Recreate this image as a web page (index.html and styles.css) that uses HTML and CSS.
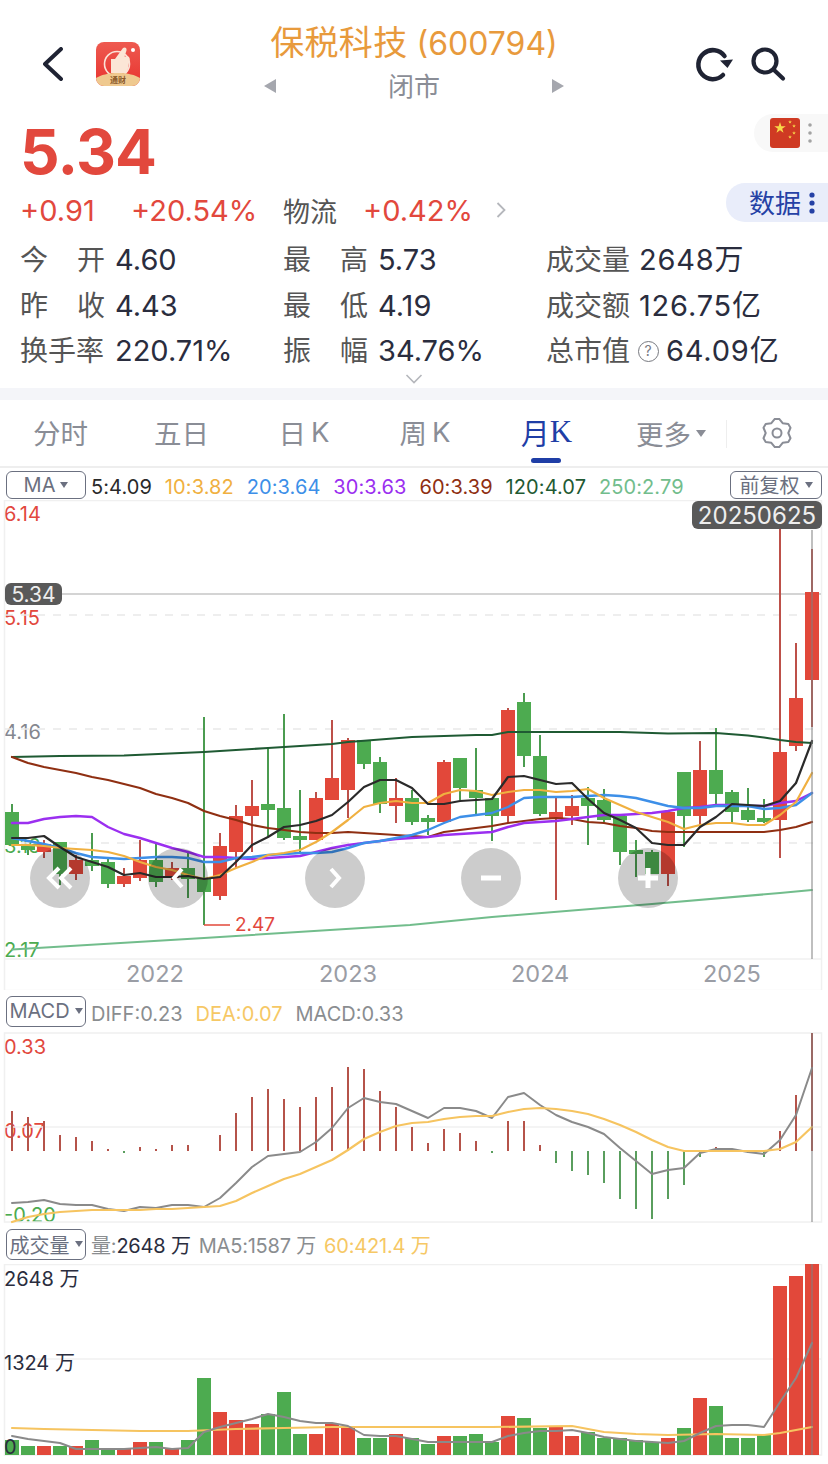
FILE: index.html
```html
<!DOCTYPE html>
<html lang="zh-CN">
<head>
    <meta charset="UTF-8">
    <meta name="viewport" content="width=device-width, initial-scale=1.0">
    <title>保税科技 (600794)</title>
    <link rel="stylesheet" href="styles.css">
</head>
<body>
    <!-- Top bar -->
    <header class="topbar">
        <div class="topbar-left">
            <svg class="icon-back" width="20" height="34" viewBox="43 47 20 34"><polyline points="61,49 45,64 61,79" fill="none" stroke="#1f2333" stroke-width="4" stroke-linecap="round" stroke-linejoin="round"/></svg>
            <svg class="app-logo" width="44" height="44" viewBox="0 0 44 44">
                <defs>
                    <linearGradient id="logoBg" x1="0" y1="0" x2="0" y2="1"><stop offset="0" stop-color="#ee5a50"/><stop offset="1" stop-color="#e8332f"/></linearGradient>
                </defs>
                <rect width="44" height="44" rx="8" fill="url(#logoBg)"/>
                <circle cx="21" cy="22" r="12.5" fill="none" stroke="#fbe3d8" stroke-width="1.6"/>
                <path d="M15 17h4l8-11c2-1.500 4 0 3.500 2.500l-2 6h3c2 0 2.500 2 2 3.500l-2 11c-.5 1.500-1.500 2-3 2H15z" fill="#fbe6d6"/>
                <circle cx="37" cy="8" r="2" fill="#fff"/>
                <path d="M0 36c5-3 12-5 22-5s17 2 22 5a8 8 0 0 1-8 8H8a8 8 0 0 1-8-8z" fill="#efc98f"/>
                <text class="logo-text" x="22" y="41">通财</text>
            </svg>
        </div>
        <div class="topbar-center">
            <div class="stock-title"><span class="stock-name">保税科技</span> (600794)</div>
            <div class="market-state">
                <span class="tri tri-left"></span>
                <span class="state-text">闭市</span>
                <span class="tri tri-right"></span>
            </div>
        </div>
        <div class="topbar-right">
            <svg width="40" height="36" viewBox="695 46 40 36">
                <path d="M724.5 56A14.5 14.5 0 1 0 723 75" fill="none" stroke="#1f2333" stroke-width="4.5" stroke-linecap="round"/>
                <polygon points="720,60.500 733,59.500 727.500,68" fill="#1f2333"/>
            </svg>
            <svg width="36" height="36" viewBox="750 46 36 36">
                <circle cx="765" cy="61" r="11.5" fill="none" stroke="#1f2333" stroke-width="4.2"/>
                <line x1="774" y1="70" x2="783" y2="78.5" stroke="#1f2333" stroke-width="4.2" stroke-linecap="round"/>
            </svg>
        </div>
    </header>

    <!-- Quote -->
    <section class="quote">
        <div class="quote-left">
            <div class="price">5.34</div>
            <div class="change-row">
                <span class="chg chg-amount">+0.91</span>
                <span class="chg chg-pct">+20.54%</span>
                <span class="sector">物流</span>
                <span class="chg chg-sector">+0.42%</span>
                <svg class="sector-more" width="10" height="16" viewBox="0 0 10 16"><polyline points="1.5,1 8.5,8 1.5,15" fill="none" stroke="#b5b7bc" stroke-width="1.8"/></svg>
            </div>
        </div>
        <div class="quote-right">
            <div class="flag-tab">
                <svg width="30" height="30" viewBox="0 0 30 30">
                    <defs><polygon id="star" points="0,-1 .225,-.309 .951,-.309 .363,.118 .588,.809 0,.382 -.588,.809 -.363,.118 -.951,-.309 -.225,-.309"/></defs>
                    <rect width="30" height="30" rx="3" fill="#cf3a23"/>
                    <use href="#star" fill="#f8d94a" transform="translate(10 10) scale(6)"/>
                    <use href="#star" fill="#f8d94a" transform="translate(20 4) scale(2)"/>
                    <use href="#star" fill="#f8d94a" transform="translate(24 8) scale(2)"/>
                    <use href="#star" fill="#f8d94a" transform="translate(24 15) scale(2)"/>
                    <use href="#star" fill="#f8d94a" transform="translate(20 19) scale(2)"/>
                </svg>
                <svg class="flag-dots" width="6" height="22" viewBox="0 0 6 22"><circle cx="3" cy="3" r="1.8" fill="#a3a3a3"/><circle cx="3" cy="11" r="1.8" fill="#a3a3a3"/><circle cx="3" cy="19" r="1.8" fill="#a3a3a3"/></svg>
            </div>
            <div class="data-tab">
                <span class="data-text">数据</span>
                <svg width="6" height="22" viewBox="0 0 6 22"><circle cx="3" cy="3" r="2.6" fill="#2541a5"/><circle cx="3" cy="11" r="2.6" fill="#2541a5"/><circle cx="3" cy="19" r="2.6" fill="#2541a5"/></svg>
            </div>
        </div>
    </section>

    <section class="stats">
        <div class="stat"><span class="stat-label"><i>今</i><i>开</i></span><span>4.60</span></div>
        <div class="stat"><span class="stat-label"><i>最</i><i>高</i></span><span>5.73</span></div>
        <div class="stat"><span class="stat-label">成交量</span><span>2648万</span></div>
        <div class="stat"><span class="stat-label"><i>昨</i><i>收</i></span><span>4.43</span></div>
        <div class="stat"><span class="stat-label"><i>最</i><i>低</i></span><span>4.19</span></div>
        <div class="stat"><span class="stat-label">成交额</span><span>126.75亿</span></div>
        <div class="stat"><span class="stat-label">换手率</span><span>220.71%</span></div>
        <div class="stat"><span class="stat-label"><i>振</i><i>幅</i></span><span>34.76%</span></div>
        <div class="stat"><span class="stat-label">总市值</span><span class="help">?</span><span>64.09亿</span></div>
    </section>
    <div class="expand">
        <svg width="18" height="10" viewBox="0 0 18 10"><polyline points="1.5,1 9,8.5 16.5,1" fill="none" stroke="#b5b7bc" stroke-width="1.6"/></svg>
    </div>
    <div class="band"></div>

    <!-- Period tabs -->
    <nav class="tabs">
        <span class="tab">分时</span>
        <span class="tab">五日</span>
        <span class="tab">日<b>K</b></span>
        <span class="tab">周<b>K</b></span>
        <span class="tab tab-active">月<b>K</b></span>
        <span class="tab tab-more">更多<em class="caret"></em></span>
        <span class="tab-gear">
            <svg width="30" height="30" viewBox="0 0 30 30">
                <path d="M12.8 .9L17.2 .9L20.65 5.2L26.3 5.95L28.5 9.75L26.3 15L28.5 20.25L26.3 24.05L20.65 24.8L17.2 29.1L12.8 29.1L9.35 24.8L3.7 24.05L1.5 20.25L3.7 15L1.5 9.75L3.7 5.95L9.35 5.2Z" fill="none" stroke="#8a8d96" stroke-width="2" stroke-linejoin="round"/>
                <circle cx="15" cy="15" r="4.5" fill="none" stroke="#8a8d96" stroke-width="2"/>
            </svg>
        </span>
    </nav>

    <!-- K line -->
    <div class="chart-head head-main">
        <span class="pick pick-ma">MA<em class="caret"></em></span>
        <span class="legend legend-main">
            <span class="c-ma5">5:4.09</span>
            <span class="c-ma10">10:3.82</span>
            <span class="c-ma20">20:3.64</span>
            <span class="c-ma30">30:3.63</span>
            <span class="c-ma60">60:3.39</span>
            <span class="c-ma120">120:4.07</span>
            <span class="c-ma250">250:2.79</span>
        </span>
        <span class="pick pick-adjust">前复权<em class="caret"></em></span>
    </div>
    <div class="chart-canvas canvas-main">
        <span class="axis-label main-a up">6.14</span>
        <span class="axis-label main-b up">5.15</span>
        <span class="axis-label main-c flat">4.16</span>
        <span class="axis-label main-d down">3.16</span>
        <span class="axis-label main-e down">2.17</span>
        <svg id="klineChart" width="828" height="490" viewBox="0 500 828 490"></svg>
        <span class="tag tag-price">5.34</span>
        <span class="tag tag-date">20250625</span>
        <span class="low-label">2.47</span>
        <span class="year year-a">2022</span>
        <span class="year year-b">2023</span>
        <span class="year year-c">2024</span>
        <span class="year year-d">2025</span>
        <span class="zoom-btn zoom-a"><svg width="30" height="24" viewBox="0 0 30 24"><path d="M14 2L4 12L14 22M26 2L16 12L26 22" fill="none" stroke="#fff" stroke-width="4"/></svg></span>
        <span class="zoom-btn zoom-b"><svg width="14" height="24" viewBox="0 0 14 24"><path d="M11 3L3 12L11 21" fill="none" stroke="#fff" stroke-width="4"/></svg></span>
        <span class="zoom-btn zoom-c"><svg width="14" height="24" viewBox="0 0 14 24"><path d="M3 3L11 12L3 21" fill="none" stroke="#fff" stroke-width="4"/></svg></span>
        <span class="zoom-btn zoom-d"><svg width="20" height="6" viewBox="0 0 20 6"><rect y=".5" width="20" height="5" fill="#fff"/></svg></span>
        <span class="zoom-btn zoom-e"><svg width="20" height="20" viewBox="0 0 20 20"><path d="M0 7.5h20v5H0zM7.5 0h5v20h-5z" fill="#fff"/></svg></span>
    </div>

    <!-- MACD -->
    <div class="chart-head head-macd">
        <span class="pick pick-sub">MACD<em class="caret"></em></span>
        <span class="legend legend-sub">
            <span class="c-grey">DIFF:0.23</span>
            <span class="c-yellow">DEA:0.07</span>
            <span class="c-grey">MACD:0.33</span>
        </span>
    </div>
    <div class="chart-canvas canvas-macd">
        <span class="axis-label row-a up">0.33</span>
        <span class="axis-label row-b up">0.07</span>
        <span class="axis-label row-c down">-0.20</span>
        <svg id="macdChart" width="828" height="192" viewBox="0 1032 828 192"></svg>
    </div>

    <!-- Volume -->
    <div class="chart-head head-vol">
        <span class="pick pick-sub">成交量<em class="caret"></em></span>
        <span class="legend legend-vol">
            <span><span class="c-grey">量:</span><span class="c-dark">2648 万</span></span>
            <span class="c-grey">MA5:1587 万</span>
            <span class="c-yellow">60:421.4 万</span>
        </span>
    </div>
    <div class="chart-canvas canvas-vol">
        <svg id="volChart" width="828" height="200" viewBox="0 1264 828 200"></svg>
        <span class="axis-label row-a dark">2648 万</span>
        <span class="axis-label row-b dark">1324 万</span>
        <span class="axis-label row-c dark">0</span>
    </div>

    <script src="chart.js"></script>
</body>
</html>
```

FILE: styles.css
```css
* {
    box-sizing: border-box;
}
body {
    margin: 0;
    width: 828px;
    height: 1464px;
    overflow: hidden;
    background-color: #fff;
    font-family: Inter, "Noto Sans CJK SC", sans-serif;
    color: #2a2d3e;
}
svg {
    display: block;
}

/* top bar */
.topbar {
    display: grid;
    grid-template-columns: 264px 300px 264px;
    height: 110px;
    padding-top: 21px;
}
.topbar-left {
    display: flex;
    align-items: flex-start;
}
.icon-back {
    margin: 26px 0 0 43px;
}
.app-logo {
    margin: 21px 0 0 33px;
}
.logo-text {
    font-size: 8px;
    font-weight: 700;
    fill: #8b5a2b;
    text-anchor: middle;
}
.topbar-center {
    text-align: center;
}
.stock-title {
    font-size: 32px;
    line-height: 43px;
    color: #e89a3c;
    white-space: nowrap;
}
.stock-name {
    font-size: 34px;
    letter-spacing: .3px;
}
.market-state {
    display: flex;
    align-items: center;
    justify-content: space-between;
    height: 42px;
    font-size: 26px;
    color: #8a8d96;
}
.state-text {
    padding-bottom: 4px;
}
.tri {
    width: 0;
    height: 0;
    border-top: 7px solid transparent;
    border-bottom: 7px solid transparent;
}
.tri-left {
    border-right: 12px solid #a5a7ae;
}
.tri-right {
    border-left: 12px solid #a5a7ae;
}
.topbar-right {
    display: flex;
    align-items: flex-start;
    gap: 15px;
    padding: 25px 0 0 131px;
}

/* quote */
.quote {
    display: flex;
    justify-content: space-between;
    height: 123px;
    margin-top: 4px;
}
.quote-left {
    padding: 4px 0 0 20px;
}
.price {
    height: 68px;
    font-size: 62px;
    line-height: 68px;
    font-weight: 700;
    letter-spacing: -.8px;
    color: #e2483d;
}
.change-row {
    display: flex;
    align-items: center;
    height: 40px;
    margin-top: 4px;
    font-size: 29px;
    white-space: nowrap;
}
.chg {
    color: #e2483d;
}
.chg-amount {
    width: 111px;
}
.chg-pct {
    width: 152px;
}
.sector {
    width: 80px;
    font-size: 27px;
    color: #555;
}
.chg-sector {
    width: 133px;
}
.quote-right {
    display: flex;
    flex-direction: column;
    align-items: flex-end;
}
.flag-tab {
    display: flex;
    align-items: center;
    width: 74px;
    height: 38px;
    padding-left: 16px;
    background-color: #f8f8f8;
    border-radius: 19px 0 0 19px;
}
.flag-dots {
    margin-left: 7px;
}
.data-tab {
    display: flex;
    align-items: center;
    gap: 8px;
    width: 102px;
    height: 39px;
    margin-top: 31px;
    padding-left: 23px;
    background-color: #e9edfa;
    border-radius: 19px 0 0 19px;
    font-size: 26px;
    color: #2541a5;
}
.data-text {
    padding-bottom: 2px;
}

/* stats */
.stats {
    display: grid;
    grid-template-columns: 263px 263px 282px;
    grid-auto-rows: 45.5px;
    padding: .5px 0 0 20px;
    font-size: 29px;
    line-height: 36px;
    white-space: nowrap;
}
.stat {
    display: flex;
    align-items: center;
}
.stat:nth-child(3n) {
    letter-spacing: .8px;
}
.stat-label {
    display: flex;
    justify-content: space-between;
    width: 85px;
    margin-right: 10px;
    font-size: 28px;
    letter-spacing: 0;
    color: #555;
}
.stat:nth-child(3n) .stat-label {
    margin-right: 8px;
}
.stat-label i {
    font-style: normal;
}
.stat .help {
    display: flex;
    align-items: center;
    justify-content: center;
    width: 21px;
    height: 21px;
    margin: 0 7px 0 -1px;
    border: 1px solid #77797f;
    border-radius: 50%;
    font-size: 14px;
    color: #77797f;
}
.expand {
    display: flex;
    justify-content: center;
    height: 14px;
}
.band {
    height: 12px;
    background-color: #f4f5f9;
}

/* tabs */
.tabs {
    display: grid;
    grid-template-columns: repeat(5, 121px) 122px 101px;
    height: 68px;
    border-bottom: 2px solid #eee;
    font-size: 27.5px;
    color: #8a8d96;
}
.tab {
    display: flex;
    align-items: center;
    justify-content: center;
    padding-bottom: 2px;
}
.tab b {
    margin-left: 5px;
    font-weight: 400;
}
.tab:nth-child(3),
.tab:nth-child(4) {
    padding-left: 3px;
}
.tab-active {
    position: relative;
    padding-left: 4px;
    color: #1f3ea6;
    font-size: 29px;
}
.tab-active b {
    margin-left: 0;
    font-family: "Liberation Serif", serif;
    font-size: 31px;
}
.tab-active::after {
    content: "";
    position: absolute;
    left: 47px;
    bottom: 3px;
    width: 30px;
    height: 5px;
    background-color: #1f3ea6;
    border-radius: 3px;
}
.tab-more {
    justify-content: flex-start;
    padding-left: 31px;
    height: 28px;
    margin-top: 20px;
    border-right: 1px solid #eee;
}
.tab-more .caret {
    border-top-width: 7px;
    border-left-width: 5.5px;
    border-right-width: 5.5px;
}
.tab-gear {
    display: flex;
    align-items: center;
    justify-content: center;
    padding-right: 1px;
}
.caret {
    display: inline-block;
    width: 0;
    height: 0;
    margin-left: 5px;
    border-top: 6px solid #8a8d96;
    border-left: 4.5px solid transparent;
    border-right: 4.5px solid transparent;
}

/* chart headers */
.chart-head {
    display: flex;
    align-items: center;
    padding: 0 6px;
    white-space: nowrap;
}
.head-main {
    height: 32px;
    padding-top: 1px;
}
.head-macd {
    height: 42px;
}
.head-vol {
    height: 40px;
}
.pick {
    display: flex;
    align-items: center;
    justify-content: center;
    width: 80px;
    height: 28px;
    border: 1px solid #6b7080;
    border-radius: 6px;
    font-size: 20px;
    color: #6b7080;
}
.pick-sub {
    height: 31px;
}
.pick-adjust {
    width: 92px;
    margin-left: auto;
}
.pick .caret {
    border-top-color: #6b7080;
}
.legend {
    display: flex;
    gap: 13px;
    margin-left: 5px;
    font-size: 20px;
}
.legend-main {
    padding-top: 5px;
    gap: 12.8px;
    letter-spacing: .1px;
}
.legend-sub {
    padding-top: 5px;
}
.legend-vol {
    gap: 8px;
    letter-spacing: -.2px;
    padding-top: 1px;
}
.c-ma5 { color: #2a2a2a; }
.c-ma10 { color: #f0b040; }
.c-ma20 { color: #3d8fe8; }
.c-ma30 { color: #9b2ff0; }
.c-ma60 { color: #8f2f12; }
.c-ma120 { color: #1f5a33; }
.c-ma250 { color: #72bd8c; }
.c-grey { color: #8a8d90; }
.c-yellow { color: #f6c865; }
.c-dark { color: #2a2d3e; }

/* chart bodies */
.chart-canvas {
    position: relative;
}
.canvas-main {
    height: 490px;
}
.canvas-macd {
    height: 192px;
}
.canvas-vol {
    height: 200px;
}
.chart-canvas svg {
    position: relative;
}
.axis-label {
    position: absolute;
    left: 4px;
    font-size: 20px;
    line-height: 20px;
    white-space: nowrap;
}
.up { color: #e2483d; }
.down { color: #4dab50; }
.flat { color: #85878f; }
.dark { color: #2a2d3e; }
.main-a { top: 4px; }
.main-b { top: 108px; }
.main-c { top: 222px; }
.main-d { top: 336px; }
.main-e { top: 440px; }
.row-a { top: 5px; }
.row-b { top: 89px; }
.row-c { top: 173px; }
.tag {
    position: absolute;
    display: flex;
    align-items: center;
    justify-content: center;
    background-color: #595959;
    color: #eee;
    border-radius: 6px;
}
.tag-price {
    top: 83px;
    left: 5px;
    width: 57px;
    height: 22px;
    font-size: 21px;
}
.tag-date {
    top: 1px;
    left: 692px;
    width: 130px;
    height: 28px;
    font-size: 24px;
}
.low-label {
    position: absolute;
    top: 415px;
    left: 235px;
    font-size: 19px;
    line-height: 20px;
    color: #e2483d;
}
.year {
    position: absolute;
    top: 462px;
    font-size: 23.5px;
    line-height: 24px;
    color: #9a9da5;
}
.year-a { left: 126px; }
.year-b { left: 319px; }
.year-c { left: 511px; }
.year-d { left: 703px; }
.zoom-btn {
    position: absolute;
    top: 348px;
    display: flex;
    align-items: center;
    justify-content: center;
    width: 60px;
    height: 60px;
    border-radius: 50%;
    background-color: rgba(0, 0, 0, 0.2);
}
.zoom-a { left: 30px; }
.zoom-b { left: 148px; }
.zoom-c { left: 305px; }
.zoom-d { left: 461px; }
.zoom-e { left: 618px; }
```

FILE: chart.js
```js
const RED = '#e2483a';
const GREEN = '#4dab50';
const WICK_RED = '#bd5049';
const WICK_GREEN = '#4b9c50';
const CROSS = 'rgba(128,128,128,0.5)';
const FRAME = '#f0f0f0';

function colX(i) {
    return 12 + 16 * i;
}

function rect(x, y, w, h, fill) {
    return `<rect x="${x}" y="${y}" width="${w}" height="${h}" fill="${fill}"/>`;
}

function hline(x1, x2, y, stroke, dash) {
    const d = dash ? ` stroke-dasharray="${dash}"` : '';
    return `<line x1="${x1}" x2="${x2}" y1="${y}" y2="${y}" stroke="${stroke}" stroke-width="1.5"${d}/>`;
}

function polyline(pts, stroke, width) {
    return `<polyline points="${pts.join(' ')}" fill="none" stroke="${stroke}" stroke-width="${width}" stroke-linejoin="round" stroke-linecap="round"/>`;
}

// one y per column -> x,y pairs
function byColumn(ys) {
    return ys.map((y, i) => colX(i) + ',' + y);
}

// [colour, high, bodyTop, bodyBottom, low]
const candles = [
    ['g',804,812,845,846],['g',846,846,850,855],['r',840,844,852,858],['g',842,842,874,885],
    ['r',855,860,874,880],['g',833,860,866,871],['g',857,862,884,888],['r',868,876,884,887],
    ['r',840,860,878,881],['g',844,860,882,887],['r',862,868,878,880],['g',852,868,879,898],
    ['g',717,878,892,925],['r',833,846,896,900],['r',805,816,852,868],['r',780,806,816,852],
    ['g',748,804,810,837],['g',714,808,838,840],['g',790,836,840,853],['r',792,798,840,840],
    ['r',720,778,800,800],['r',738,740,790,818],['g',740,740,764,769],['g',757,762,804,813],
    ['r',778,798,806,823],['g',790,798,822,825],['g',815,818,822,835],['r',760,762,822,822],
    ['g',758,758,788,800],['g',748,790,798,816],['g',798,798,816,841],['r',708,710,816,823],
    ['g',693,702,756,767],['g',735,756,814,816],['r',797,812,818,900],['r',795,806,816,825],
    ['g',787,798,806,845],['g',789,800,820,822],['g',816,816,852,865],['g',840,850,854,877],
    ['g',850,852,874,874],['r',810,812,874,886],['g',772,772,816,847],['r',741,770,816,825],
    ['g',728,770,794,806],['g',790,792,812,823],['g',788,810,820,822],['g',799,818,822,823],
    ['r',528,752,820,858],['r',643,698,746,751],['r',549,592,680,727]
];

const ma5 = [838,838,836,847,857,862,867,875,873,877,877,876,879,877,862,845,837,827,825,821,815,802,787,780,780,788,804,804,801,800,799,777,776,780,784,783,799,813,820,828,843,845,845,827,817,804,805,806,801,783,741];
const ma10 = [845,845,846,848,849,850,852,856,862,867,870,875,879,875,868,862,855,853,850,842,832,820,807,803,801,803,803,794,790,791,795,792,790,790,792,791,789,798,805,812,817,822,829,825,823,823,825,825,815,802,773];
const ma20 = [838,841,844,848,853,857,858,859,858,857,857,858,862,862,858,857,855,854,853,853,852,848,843,841,838,835,830,823,817,815,813,807,798,797,797,797,796,795,796,798,802,806,808,808,806,806,806,809,808,805,793];
const ma30 = [823,823,819,817,816,817,827,834,838,843,848,852,857,857,858,859,858,857,856,852,848,845,843,841,839,838,837,835,834,833,832,827,823,822,821,819,817,815,815,814,813,811,808,807,805,805,806,806,803,801,793];
const ma60 = [757,763,767,770,773,777,780,784,788,794,798,803,811,816,820,825,828,830,832,833,833,832,833,834,835,836,837,832,830,828,826,823,821,819,818,819,822,823,826,828,831,832,832,832,832,832,832,832,830,827,822];
const ma120 = ['12,757','60,756','124,755.5','204,752','268,748','332,744','348,742','412,737','476,735','492,735','508,732','524,732','620,732','668,733.5','716,733','748,735.5','764,737.5','780,740','796,742','812,743'];
const ma250 = ['12,949.5','204,938','410,925','492,917','652,904','780,893','812,890'];

function drawKline() {
    let s = '';
    // frame and grid
    s += `<rect x="4.5" y="500.5" width="817" height="490" fill="none" stroke="${FRAME}" stroke-width="1.5"/>`;
    s += hline(4, 822, 959, FRAME);
    s += hline(5, 821, 615, '#e9e9e9', '8 8');
    s += hline(5, 821, 729, '#e9e9e9', '8 8');
    s += hline(5, 821, 843, '#e9e9e9', '8 8');
    s += hline(5, 821, 594, '#c6c6c6');

    candles.forEach((c, i) => {
        const x = colX(i);
        s += rect(x - 1, c[1], 2, c[4] - c[1], c[0] === 'r' ? WICK_RED : WICK_GREEN);
        s += rect(x - 7, c[2], 14, c[3] - c[2], c[0] === 'r' ? RED : GREEN);
    });

    // lowest price marker
    s += hline(204, 230, 925, RED);

    s += polyline(ma250, '#72bd8c', 2);
    s += polyline(ma120, '#1f5a33', 2.2);
    s += polyline(byColumn(ma60), '#8f2f12', 2.2);
    s += polyline(byColumn(ma30), '#9b2ff0', 2.4);
    s += polyline(byColumn(ma20), '#3d8fe8', 2.4);
    s += polyline(byColumn(ma10), '#f0b040', 2.2);
    s += polyline(byColumn(ma5), '#2a2a2a', 2.2);

    // crosshair
    s += rect(811, 530, 2, 429, CROSS);
    document.getElementById('klineChart').innerHTML = s;
}

// end of each bar; zero line at 1151
const macdBars = [1111,1117,1121,1135,1137,1141,1149,1153,1147,1149,1145,1145,1151,1135,1113,1097,1089,1099,1107,1097,1087,1067,1069,1091,1107,1127,1143,1129,1133,1141,1153,1121,1121,1145,1163,1171,1175,1183,1199,1209,1219,1199,1185,1157,1147,1149,1153,1157,1131,1095,1033];
const diff = [1203,1202,1200,1204,1205,1205,1209,1211,1207,1208,1205,1205,1207,1198,1183,1167,1156,1154,1152,1142,1128,1108,1098,1102,1104,1111,1118,1108,1108,1111,1118,1097,1093,1105,1115,1122,1127,1134,1148,1161,1174,1170,1168,1153,1149,1149,1152,1154,1140,1115,1068];
const dea = [1222,1217,1214,1212,1211,1210,1210,1210,1210,1209,1209,1208,1207,1206,1201,1193,1186,1179,1174,1167,1160,1150,1139,1132,1126,1123,1122,1119,1117,1116,1116,1112,1109,1108,1109,1111,1114,1119,1125,1132,1140,1147,1151,1151,1151,1151,1151,1151,1149,1142,1127];

function drawMacd() {
    const ZERO = 1151;
    let s = '';
    s += `<rect x="4.5" y="1033" width="817" height="189" fill="none" stroke="${FRAME}" stroke-width="1.5"/>`;
    s += hline(5, 821, 1127, FRAME);
    macdBars.forEach((y, i) => {
        const x = colX(i) - 1;
        if (y < ZERO) {
            s += rect(x, y, 2, ZERO - y, '#b5534a');
        } else if (y > ZERO) {
            s += rect(x, ZERO, 2, y - ZERO, '#5a9e5e');
        }
    });
    s += polyline(byColumn(diff), '#8a8a8a', 2);
    s += polyline(byColumn(dea), '#f6c460', 2.2);
    s += rect(811, 1033, 2, 189, CROSS);
    document.getElementById('macdChart').innerHTML = s;
}

const volTops = [1440,1446,1446,1446,1446,1440,1449,1449,1442,1442,1449,1440,1378,1412,1420,1424,1414,1392,1434,1434,1424,1426,1438,1438,1434,1438,1444,1436,1436,1434,1442,1416,1418,1428,1426,1436,1432,1438,1438,1440,1442,1438,1428,1398,1406,1438,1438,1435,1286,1276,1264];
const volMa5 = [1436,1439,1441,1443,1449,1449,1449,1449,1448,1447,1449,1448,1432,1427,1423,1419,1414,1417,1421,1423,1423,1426,1435,1436,1436,1439,1442,1442,1442,1442,1442,1436,1433,1431,1431,1430,1433,1437,1439,1441,1442,1443,1441,1433,1426,1425,1425,1427,1402,1378,1343];
const volMa60 = ['12,1428','44,1429','92,1430','140,1431','188,1431','236,1429','284,1428','333,1427','492,1427','572,1426','588,1429','604,1432','636,1434','668,1435','716,1434','764,1435','780,1433','796,1430','812,1427'];

function drawVolume() {
    let s = '';
    s += `<rect x="4.5" y="1264.5" width="817" height="190.5" fill="none" stroke="${FRAME}" stroke-width="1.5"/>`;
    s += hline(5, 821, 1359, FRAME);
    volTops.forEach((y, i) => {
        s += rect(colX(i) - 7, y, 14, 1455 - y, candles[i][0] === 'r' ? RED : GREEN);
    });
    s += polyline(volMa60, '#f6c460', 2.2);
    s += polyline(byColumn(volMa5), '#8a8a8a', 2);
    s += rect(811, 1264, 2, 191, CROSS);
    document.getElementById('volChart').innerHTML = s;
}

drawKline();
drawMacd();
drawVolume();
```
